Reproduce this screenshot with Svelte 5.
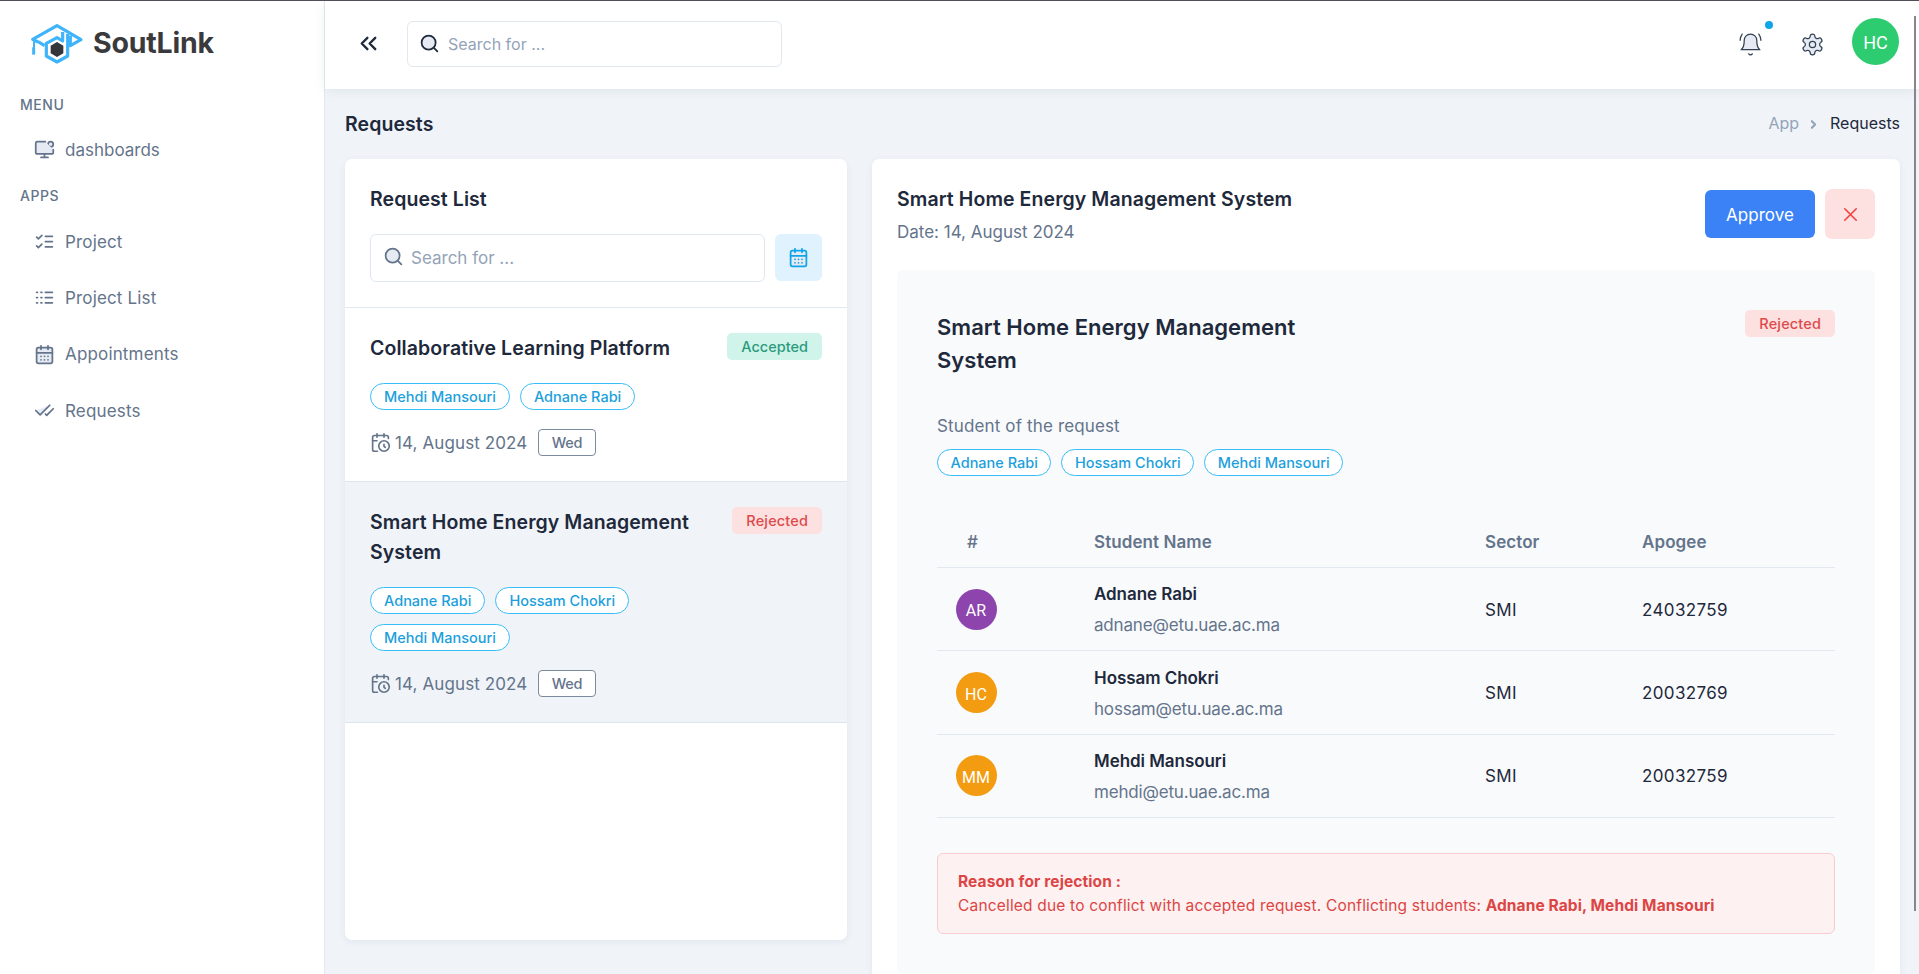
<script>
  const icons = {
    monitor: '<circle cx="19" cy="6" r="3"/><path d="M22 12v3a2 2 0 0 1-2 2H4a2 2 0 0 1-2-2V5a2 2 0 0 1 2-2h9"/><path d="M12 17v4M8 21h8"/>',
    checks: '<path d="m3 17 2 2 4-4M3 7l2 2 4-4M13 6h8M13 12h8M13 18h8" fill="none"/>',
    logs: '<path d="M13 12h8M13 18h8M13 6h8M3 12h1M3 18h1M3 6h1M8 12h1M8 18h1M8 6h1" fill="none"/>',
    calendar: '<rect width="18" height="18" x="3" y="4" rx="2"/><path d="M8 2v4M16 2v4M3 10h18M8 14h.01M12 14h.01M16 14h.01M8 18h.01M12 18h.01M16 18h.01"/>',
    doubleCheck: '<path d="M18 6 7 17l-5-5"/><path d="m22 10-7.5 7.5L13 16"/>',
    calendarClock: '<path d="M21 7.5V6a2 2 0 0 0-2-2H5a2 2 0 0 0-2 2v14a2 2 0 0 0 2 2h3.5" fill="none"/><path d="M16 2v4M8 2v4M3 10h5"/><path d="M17.5 17.5 16 16.3V14" fill="none"/><circle cx="16" cy="16" r="6" fill="none"/>',
    collapse: '<path d="m11 17-5-5 5-5M18 17l-5-5 5-5" fill="none"/>',
    search: '<circle cx="11" cy="11" r="8"/><path d="m21 21-4.3-4.3"/>',
    bell: '<path d="M6 8a6 6 0 0 1 12 0c0 7 3 9 3 9H3s3-2 3-9"/><path d="M10.3 21a1.94 1.94 0 0 0 3.4 0"/><path d="M4 2C2.8 3.7 2 5.7 2 8M22 8c0-2.3-.8-4.3-2-6" fill="none"/>',
    gear: '<path d="M12.22 2h-.44a2 2 0 0 0-2 2v.18a2 2 0 0 1-1 1.73l-.43.25a2 2 0 0 1-2 0l-.15-.08a2 2 0 0 0-2.73.73l-.22.38a2 2 0 0 0 .73 2.73l.15.1a2 2 0 0 1 1 1.72v.51a2 2 0 0 1-1 1.74l-.15.09a2 2 0 0 0-.73 2.73l.22.38a2 2 0 0 0 2.73.73l.15-.08a2 2 0 0 1 2 0l.43.25a2 2 0 0 1 1 1.73V20a2 2 0 0 0 2 2h.44a2 2 0 0 0 2-2v-.18a2 2 0 0 1 1-1.73l.43-.25a2 2 0 0 1 2 0l.15.08a2 2 0 0 0 2.73-.73l.22-.39a2 2 0 0 0-.73-2.73l-.15-.08a2 2 0 0 1-1-1.74v-.5a2 2 0 0 1 1-1.74l.15-.09a2 2 0 0 0 .73-2.73l-.22-.38a2 2 0 0 0-2.73-.73l-.15.08a2 2 0 0 1-2 0l-.43-.25a2 2 0 0 1-1-1.73V4a2 2 0 0 0-2-2z"/><circle cx="12" cy="12" r="3"/>',
    chevron: '<path d="m9 18 6-6-6-6" fill="none"/>',
    close: '<path d="M18 6 6 18M6 6l12 12" fill="none"/>'
  };

  const apps = [
    { label: 'Project', icon: 'checks' },
    { label: 'Project List', icon: 'logs' },
    { label: 'Appointments', icon: 'calendar' },
    { label: 'Requests', icon: 'doubleCheck' }
  ];

  const requests = [
    { title: 'Collaborative Learning Platform', status: 'Accepted', students: ['Mehdi Mansouri', 'Adnane Rabi'], date: '14, August 2024', day: 'Wed', active: false },
    { title: 'Smart Home Energy Management System', status: 'Rejected', students: ['Adnane Rabi', 'Hossam Chokri', 'Mehdi Mansouri'], date: '14, August 2024', day: 'Wed', active: true }
  ];

  const students = [
    { initials: 'AR', color: '#8e44ad', name: 'Adnane Rabi', email: 'adnane@etu.uae.ac.ma', sector: 'SMI', apogee: '24032759' },
    { initials: 'HC', color: '#f39c12', name: 'Hossam Chokri', email: 'hossam@etu.uae.ac.ma', sector: 'SMI', apogee: '20032769' },
    { initials: 'MM', color: '#f39c12', name: 'Mehdi Mansouri', email: 'mehdi@etu.uae.ac.ma', sector: 'SMI', apogee: '20032759' }
  ];
</script>

{#snippet icon(name, size, weight = 2)}
  <svg class="icon" width={size} height={size} viewBox="0 0 24 24" stroke-width={weight} aria-hidden="true">{@html icons[name]}</svg>
{/snippet}

<div class="shell">
  <aside class="sidebar">
    <div class="brand">
      <svg width="62" height="48" viewBox="0 0 186 144" aria-hidden="true">
        <g fill="none" stroke="#3fb4fa" stroke-width="9.5" stroke-linejoin="round">
          <path d="M36 66 20 58 93 17l72 42-32 18V47" />
          <path d="M24 60v24" stroke-width="6" />
          <path d="M23 82v22" stroke-width="9" />
          <path d="m36 65 20 12" />
          <path d="M110 36v27L93 53 61 70v38l32 18 32-18V42" />
        </g>
        <path d="m93 66 19 11v23l-19 11-19-11V77z" fill="#35363b" />
      </svg>
      <span class="wordmark">SoutLink</span>
    </div>
    <p class="section">MENU</p>
    <a class="link" href="#dashboards">{@render icon('monitor', 21)}<span>dashboards</span></a>
    <p class="section apps">APPS</p>
    <nav class="links">
      {#each apps as app}
        <a class="link" href="#{app.icon}">{@render icon(app.icon, 21)}<span>{app.label}</span></a>
      {/each}
    </nav>
  </aside>

  <div class="page">
    <header class="topbar">
      <button class="plain collapse">{@render icon('collapse', 27, 2.1)}</button>
      <label class="field top-search">{@render icon('search', 21)}<input placeholder="Search for ..." /></label>
      <div class="actions">
        <button class="plain bell">{@render icon('bell', 25, 1.2)}<i class="dot"></i></button>
        <button class="plain gear">{@render icon('gear', 25, 1.2)}</button>
        <span class="avatar user">HC</span>
      </div>
    </header>

    <div class="title-row">
      <h1>Requests</h1>
      <div class="crumbs"><span class="muted">App</span>{@render icon('chevron', 13, 4)}<span>Requests</span></div>
    </div>

    <main class="content">
      <section class="card list">
        <div class="list-head">
          <h2>Request List</h2>
          <div class="search-row">
            <label class="field">{@render icon('search', 21)}<input placeholder="Search for ..." /></label>
            <button class="calendar-button">{@render icon('calendar', 21)}</button>
          </div>
        </div>
        {#each requests as request}
          <article class="request" class:active={request.active}>
            <div class="request-body">
              <h3>{request.title}</h3>
              <div class="chips">
                {#each request.students as student}<span class="chip">{student}</span>{/each}
              </div>
              <div class="when">{@render icon('calendarClock', 21, 1.9)}<span class="date">{request.date}</span><span class="day">{request.day}</span></div>
            </div>
            <span class="badge {request.status.toLowerCase()}">{request.status}</span>
          </article>
        {/each}
      </section>

      <section class="card detail">
        <div class="detail-head">
          <div>
            <h2>Smart Home Energy Management System</h2>
            <p class="detail-date">Date: 14, August 2024</p>
          </div>
          <div class="detail-actions">
            <button class="approve">Approve</button>
            <button class="reject">{@render icon('close', 23, 1.7)}</button>
          </div>
        </div>

        <div class="inset">
          <div class="inset-head">
            <h3>Smart Home Energy Management System</h3>
            <span class="badge rejected">Rejected</span>
          </div>
          <p class="caption">Student of the request</p>
          <div class="chips">
            <span class="chip">Adnane Rabi</span><span class="chip">Hossam Chokri</span><span class="chip">Mehdi Mansouri</span>
          </div>

          <div class="table">
            <div class="row head"><span class="hash">#</span><span>Student Name</span><span>Sector</span><span>Apogee</span></div>
            {#each students as s}
              <div class="row">
                <span class="who"><span class="avatar" style:background={s.color}>{s.initials}</span></span>
                <div class="person"><strong>{s.name}</strong><span>{s.email}</span></div>
                <span class="sector">{s.sector}</span>
                <span class="number">{s.apogee}</span>
              </div>
            {/each}
          </div>

          <div class="alert">
            <b>Reason for rejection :</b>
            <p>Cancelled due to conflict with accepted request. Conflicting students: <b>Adnane Rabi, Mehdi Mansouri</b></p>
          </div>
        </div>
      </section>
    </main>
  </div>
  <div class="scroll-thumb"></div>
</div>

<style>
  :global(body) { margin: 0; overflow: hidden; }
  :global(#app) { font-family: Inter, "Liberation Sans", sans-serif; }
  .shell {
    box-sizing: border-box; position: relative;
    display: grid; grid-template-columns: 325px 1fr;
    height: 974px; overflow: hidden;
    border-top: 1px solid #504f58;
    background: #f0f4f9; color: #1e293b; font-size: 17px; letter-spacing: .08px;
  }
  .shell :global(*) { box-sizing: border-box; }
  h1, h2, h3, p { margin: 0; }
  button { font: inherit; letter-spacing: inherit; border: 0; padding: 0; display: flex; align-items: center; justify-content: center; }
  .plain { background: none; color: #334155; }
  .icon { display: block; flex: none; fill: #e6ebf3; stroke: currentColor; stroke-linecap: round; stroke-linejoin: round; }

  .sidebar { background: #fff; border-right: 1px solid #e2e8f0; color: #64748b; }
  .brand { display: flex; align-items: center; height: 80px; padding: 6px 0 0 26px; }
  .wordmark { margin-left: 5px; color: #3a3a3d; font-size: 28.5px; font-weight: 700; letter-spacing: -.2px; line-height: 44px; padding-bottom: 3px; }
  .section { padding-left: 20px; height: 47px; line-height: 47px; font-size: 14px; font-weight: 500; letter-spacing: .55px; }
  .section.apps { height: 47px; line-height: 48px; margin-bottom: 0; }
  .link { display: flex; align-items: center; gap: 10px; height: 45px; padding-left: 34px; color: inherit; text-decoration: none; }
  .sidebar > .link { margin-top: -1px; letter-spacing: 0; }
  .links { display: flex; flex-direction: column; gap: 11.4px; letter-spacing: .16px; }

  .page { display: flex; flex-direction: column; min-width: 0; min-height: 0; }
  .topbar { flex: none; display: flex; align-items: center; height: 88px; padding: 0 20px 2px 29px; background: #fff; box-shadow: 0 2px 10px rgba(100, 116, 139, .11); }
  .collapse { width: 28px; margin-right: 25px; padding-bottom: 1px; color: #1e293b; }
  .field { display: flex; align-items: center; gap: 8px; padding: 0 11px; border: 1px solid #e2e8f0; border-radius: 6px; background: #fff; }
  .field input { flex: 1; min-width: 0; padding: 0; border: 0; outline: 0; background: none; font: inherit; letter-spacing: 0; }
  .field input::placeholder { color: #94a3b8; opacity: 1; }
  .top-search { width: 375px; height: 46px; padding-bottom: 1px; font-size: 16px; color: #1e293b; }
  .actions { display: flex; align-items: center; margin-left: auto; }
  .bell { position: relative; }
  .dot { position: absolute; right: -10px; top: -11px; width: 8px; height: 8px; border-radius: 50%; background: #0ea5e9; }
  .gear { margin: 0 27px 0 37px; }
  .avatar { display: flex; align-items: center; justify-content: center; width: 41px; height: 41px; border-radius: 50%; color: #fff; font: 16px/41px Roboto, sans-serif; letter-spacing: 0; padding-top: 3px; }
  .user { width: 47px; height: 47px; background: #2ecc71; font-size: 18px; margin-bottom: 6px; padding-top: 2px; }

  .title-row { flex: none; display: flex; align-items: center; justify-content: space-between; height: 70px; padding: 0 19px 0 20px; }
  h1, h2, .request h3 { font-size: 19.5px; font-weight: 600; line-height: 30px; letter-spacing: .08px; }
  .crumbs { display: flex; align-items: center; font-size: 16px; padding-bottom: 2px; letter-spacing: 0; }
  .crumbs .icon { margin: 2px 10px 0 8px; color: #94a3b8; }
  .muted { color: #94a3b8; }

  .content { display: grid; grid-template-columns: 502px 1fr; gap: 24.5px; align-items: start; padding: 0 19px 0 20px; }
  .card { background: #fff; border-radius: 7px; box-shadow: 0 2px 6px rgba(100, 116, 139, .1); }
  .list { height: 781px; }
  .list-head { padding: 25px 25px; height: 149px; border-bottom: 1px solid #e2e8f0; }
  .search-row { display: flex; gap: 10px; margin-top: 20px; }
  .search-row .field { width: 395px; height: 48px; color: #64748b; padding-left: 12px; gap: 7px; }
  .search-row .field .icon { margin-bottom: 4px; }
  .calendar-button { width: 47px; height: 47px; border-radius: 6px; background: #dff2fe; color: #0ea5e9; }
  .request { display: flex; justify-content: space-between; align-items: flex-start; padding: 25px 25px; border-bottom: 1px solid #dde5ee; }
  .request.active { background: #f0f4f9; }
  .request-body { width: 345px; }
  .chips { display: flex; flex-wrap: wrap; gap: 10px; }
  .request .chips { margin: 20px 0 19px; }
  .chip, .day, .badge { display: flex; align-items: center; justify-content: center; height: 27px; font-size: 14.5px; font-weight: 500; letter-spacing: 0; white-space: nowrap; }
  .chip { padding: 0 12.5px; border: 1px solid #38bdf8; border-radius: 14px; background: #fff; color: #1c9fdc; }
  .request .chip { padding: 0 13px; }
  .when { display: flex; align-items: center; color: #64748b; }
  .date { margin: 0 10.5px 0 4px; letter-spacing: .11px; }
  .day { width: 58px; border: 1px solid #7c8a9e; border-radius: 4px; background: #fff; letter-spacing: -.3px; }
  .badge { padding: 0 14px; border-radius: 5px; }
  .accepted { background: #d0f4ea; color: #2b9a7d; }
  .rejected { background: #fde1e1; color: #dd4a4a; letter-spacing: .14px; }

  .detail { height: 840px; padding: 25px 25px 0 25.5px; }
  .detail-head { display: flex; justify-content: space-between; height: 86px; }
  .detail-date { margin-top: 6px; line-height: 25px; color: #64748b; letter-spacing: 0; }
  .detail-actions { display: flex; align-items: center; gap: 10px; height: 60px; }
  .approve { width: 110px; height: 48px; padding-top: 1px; border-radius: 6px; background: #3b82f6; color: #fff; }
  .reject { width: 50px; height: 50px; border-radius: 7px; background: #fde1e1; color: #ef4444; }
  .inset { height: 704px; padding: 40px 40px 0; border-radius: 6px; background: #f9fafc; }
  .inset-head { display: flex; justify-content: space-between; align-items: flex-start; }
  .inset h3 { width: 380px; padding-top: 1px; font-size: 22px; font-weight: 600; line-height: 33px; letter-spacing: .03px; }
  .caption { margin: 36px 0 10px; line-height: 26px; color: #64748b; letter-spacing: .14px; }
  .table { margin-top: 40px; }
  .row { display: grid; grid-template-columns: 157px 391px 157px 1fr; align-items: center; height: 83.4px; border-bottom: 1px solid #e2e8f0; }
  .row.head { height: 52px; font-weight: 600; color: #64748b; }
  .hash { padding-left: 30px; font-weight: 500; }
  .who { padding-left: 18.5px; }
  .person { display: flex; flex-direction: column; padding-top: 2px; line-height: 31px; }
  .person strong { font-weight: 600; letter-spacing: -.05px; }
  .person span { color: #64748b; letter-spacing: -.18px; }
  .number { padding-top: 1px; letter-spacing: .36px; }
  .sector { padding-top: 1px; letter-spacing: .36px; }
  .alert { margin-top: 35px; height: 81px; padding: 16px 20px; border: 1px solid #f8cdcf; border-radius: 6px; background: #fef1f1; color: #dc4545; font-size: 15.5px; line-height: 24px; letter-spacing: .18px; }
  .alert b { font-weight: 700; letter-spacing: .1px; }

  .scroll-thumb { position: absolute; right: 3px; top: 15px; width: 2px; height: 895px; background: #85878c; }
</style>
